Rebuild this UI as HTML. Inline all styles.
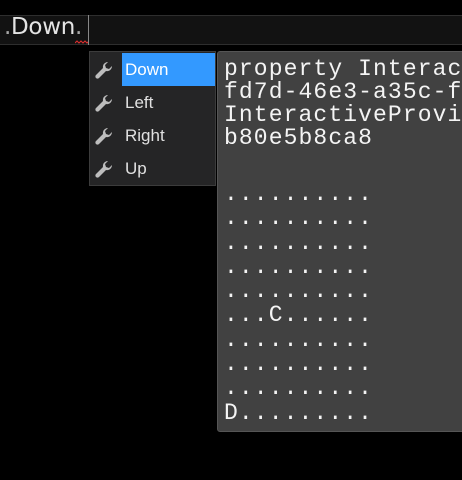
<!DOCTYPE html>
<html><head><meta charset="utf-8"><style>
html,body{margin:0;padding:0;background:#000;width:462px;height:480px;overflow:hidden;position:relative;font-family:"Liberation Sans",sans-serif}
.bar{position:absolute;left:0;top:15px;width:462px;height:28px;background:#121212;border-top:1px solid #2e2e2e;border-bottom:1px solid #2e2e2e}
.code{position:absolute;left:4px;top:14px;font-size:23px;color:#e4e4e4;font-family:"DejaVu Sans",sans-serif;letter-spacing:-0.3px}
.code .p{color:#a8a8a8}
.cursor{position:absolute;left:88px;top:15px;width:1px;height:30px;background:#888}
.list{position:absolute;left:89px;top:51px;width:127px;height:135px;background:#252526;border:1px solid #3c3c3c;box-sizing:border-box}
.row{position:absolute;left:0;height:33px;width:126px;font-size:17px;color:#e0e0e0;line-height:33px}
.row .t{position:absolute;left:32px;top:0;height:33px;padding-left:3px;width:90px}
.row.sel .t{background:#3399ff;color:#fff}
.row svg{position:absolute;left:3px;top:7px}
.tip{position:absolute;left:217px;top:51px;width:260px;height:381px;background:#414141;border:1px solid #555;border-radius:3px;box-sizing:border-box;overflow:hidden}
.tip pre{margin:0;position:absolute;left:6px;font-family:"Liberation Mono",monospace;font-size:23px;letter-spacing:1.1px;color:#f4f4f4}
</style></head><body>
<div class="bar"></div>
<div class="code"><span class="p">.</span>Down<span class="p">.</span></div>
<svg style="position:absolute;left:75px;top:40px" width="14" height="5"><path d="M0 3 L2 1 L4 3 L6 1 L8 3 L10 1 L12 3 L14 1" stroke="#e03030" fill="none" stroke-width="1"/></svg>
<div class="cursor"></div>
<div class="list">
<div class="row sel" style="top:1px"><svg width="20" height="20" viewBox="0 0 20 20"><path d="M15 2 a5 5 0 0 0-5 6 L3 15 a2 2 0 0 0 3 3 L13 11 a5 5 0 0 0 6-5 L16 9 L13 8 L12 5 Z" fill="#bdbdbd"/></svg><span class="t">Down</span></div>
<div class="row" style="top:34px"><svg width="20" height="20" viewBox="0 0 20 20"><path d="M15 2 a5 5 0 0 0-5 6 L3 15 a2 2 0 0 0 3 3 L13 11 a5 5 0 0 0 6-5 L16 9 L13 8 L12 5 Z" fill="#bdbdbd"/></svg><span class="t">Left</span></div>
<div class="row" style="top:67px"><svg width="20" height="20" viewBox="0 0 20 20"><path d="M15 2 a5 5 0 0 0-5 6 L3 15 a2 2 0 0 0 3 3 L13 11 a5 5 0 0 0 6-5 L16 9 L13 8 L12 5 Z" fill="#bdbdbd"/></svg><span class="t">Right</span></div>
<div class="row" style="top:100px"><svg width="20" height="20" viewBox="0 0 20 20"><path d="M15 2 a5 5 0 0 0-5 6 L3 15 a2 2 0 0 0 3 3 L13 11 a5 5 0 0 0 6-5 L16 9 L13 8 L12 5 Z" fill="#bdbdbd"/></svg><span class="t">Up</span></div>
</div>
<div class="tip"><pre style="top:6px;line-height:23px">property Interactive
fd7d-46e3-a35c-f
InteractiveProvider
b80e5b8ca8</pre><pre style="top:130px;line-height:24.3px">..........
..........
..........
..........
..........
...C......
..........
..........
..........
D.........</pre></div>
</body></html>
